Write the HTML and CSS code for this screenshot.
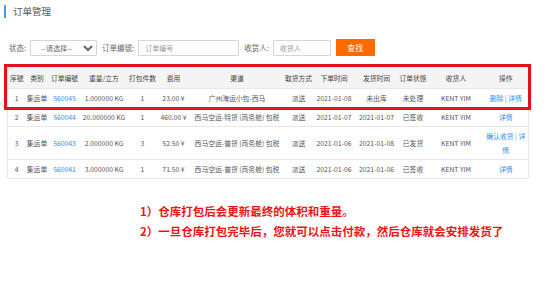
FILE: index.html
```html
<!DOCTYPE html>
<html>

<head>
  <title>订单管理</title>
  <link rel="stylesheet" href="styles.css">
</head>

<body>
  <section class="page">
    <h2 class="title">订单管理</h2>

    <form class="filter">
      <label>状态:</label>
      <select class="sel">
        <option>--请选择--</option>
      </select>
      <label>订单编號:</label>
      <input type="text" class="inp inp-no" placeholder="订单编号">
      <label>收货人:</label>
      <input type="text" class="inp inp-name" placeholder="收货人">
      <button type="button" class="btn">查找</button>
    </form>

    <div class="table-wrap">
      <table class="orders">
        <colgroup>
          <col style="width:18px"><col style="width:23px"><col style="width:32px"><col style="width:47px">
          <col style="width:30px"><col style="width:32px"><col style="width:95px"><col style="width:28px">
          <col style="width:43px"><col style="width:42px"><col style="width:31px"><col style="width:55px">
          <col style="width:45px">
        </colgroup>
        <thead>
          <tr>
            <th>序號</th><th>类别</th><th>订单编號</th><th>重量/立方</th><th>打包件数</th><th>费用</th>
            <th>渠道</th><th>取货方式</th><th>下单时间</th><th>发货时间</th><th>订单状態</th><th>收货人</th><th>操作</th>
          </tr>
        </thead>
        <tbody>
          <tr>
            <td>1</td><td>集运单</td><td><a href="#">560045</a></td><td>1.000000 KG</td><td>1</td><td>23.00 ¥</td>
            <td>广州海运小包-西马</td><td>派送</td><td>2021-01-08</td><td>未出库</td><td>未处理</td><td>KENT YIM</td>
            <td class="ops"><a href="#">删除</a> | <a href="#">详情</a></td>
          </tr>
          <tr>
            <td>2</td><td>集运单</td><td><a href="#">560044</a></td><td>20.000000 KG</td><td>1</td><td>460.00 ¥</td>
            <td>西马空运-特货 (商务舱) 包税</td><td>派送</td><td>2021-01-07</td><td>2021-01-07</td><td>已签收</td><td>KENT YIM</td>
            <td class="ops"><a href="#">详情</a></td>
          </tr>
          <tr>
            <td>3</td><td>集运单</td><td><a href="#">560043</a></td><td>2.000000 KG</td><td>3</td><td>52.50 ¥</td>
            <td>西马空运-普货 (商务舱) 包税</td><td>派送</td><td>2021-01-06</td><td>2021-01-08</td><td>已发货</td><td>KENT YIM</td>
            <td class="ops"><a href="#">确认收货</a> | <a href="#">详情</a></td>
          </tr>
          <tr>
            <td>4</td><td>集运单</td><td><a href="#">560041</a></td><td>3.000000 KG</td><td>1</td><td>71.50 ¥</td>
            <td>西马空运-普货 (商务舱) 包税</td><td>派送</td><td>2021-01-06</td><td>2021-01-06</td><td>已签收</td><td>KENT YIM</td>
            <td class="ops"><a href="#">详情</a></td>
          </tr>
        </tbody>
      </table>
      <div class="mark"></div>
    </div>

    <div class="notes">
      <p>1）仓库打包后会更新最终的体积和重量。</p>
      <p>2）一旦仓库打包完毕后，您就可以点击付款，然后仓库就会安排发货了</p>
    </div>
  </section>
</body>

</html>
```

FILE: styles.css
```css
* {
  margin: 0;
  padding: 0;
  box-sizing: border-box;
  font-family: "Noto Sans CJK SC", "Noto Sans", sans-serif;
}
:root {
  --text-color: #555555;
  --link-color: #2d8cf0;
  --line-color: #e8e8e8;
  --head-bg: #f4f4f4;
}
body {
  background: #ffffff;
  color: var(--text-color);
}
.page {
  padding: 5px 0 0 0;
}
.title {
  font-size: 9.5px;
  font-weight: normal;
  line-height: 13px;
  margin-left: 4px;
  padding-left: 7px;
  border-left: 2px solid #3d9de6;
  color: #555;
}

.filter {
  display: flex;
  align-items: center;
  margin-top: 21px;
  padding-left: 9px;
  height: 17px;
}
.filter label {
  font-size: 7.5px;
  color: #666;
  margin-right: 4px;
}
.sel,
.inp {
  height: 16px;
  border: 1px solid #d6d6d6;
  border-radius: 1px;
  background: #fff;
  font-size: 7px;
  color: #666;
  padding: 0 6px;
  outline: none;
}
.sel {
  width: 67px;
  margin-right: 5px;
}
.inp-no {
  width: 101px;
  margin-right: 5px;
}
.inp-name {
  width: 58px;
  margin-right: 5px;
}
.inp::placeholder {
  color: #999;
}
.btn {
  width: 39px;
  height: 17px;
  border: none;
  background: #ff6a00;
  color: #fff;
  font-size: 8px;
}

.table-wrap {
  position: relative;
  margin: 11px 0 0 7px;
  width: 521px;
}
.orders {
  width: 521px;
  table-layout: fixed;
  border-collapse: collapse;
  font-size: 6.8px;
  border: 1px solid var(--line-color);
}
.orders th,
.orders td {
  text-align: center;
  line-height: 14px;
  padding: 2px 0;
  border-bottom: 1px solid var(--line-color);
}
.orders th {
  background: var(--head-bg);
  font-weight: normal;
  color: #444;
  white-space: nowrap;
  padding: 3px 0;
}
.orders td {
  color: #555;
  white-space: nowrap;
}
.orders a {
  color: var(--link-color);
  text-decoration: none;
}
.orders .ops {
  padding: 2px 1px;
  white-space: normal;
  color: #888;
}
.mark {
  position: absolute;
  left: -3px;
  top: -3px;
  width: 527px;
  height: 46px;
  border: 3px solid #e8101a;
}

.notes {
  margin-top: 22px;
  padding-left: 140px;
}
.notes p {
  color: #f01414;
  font-weight: bold;
  font-size: 11.5px;
  line-height: 20px;
}
```
